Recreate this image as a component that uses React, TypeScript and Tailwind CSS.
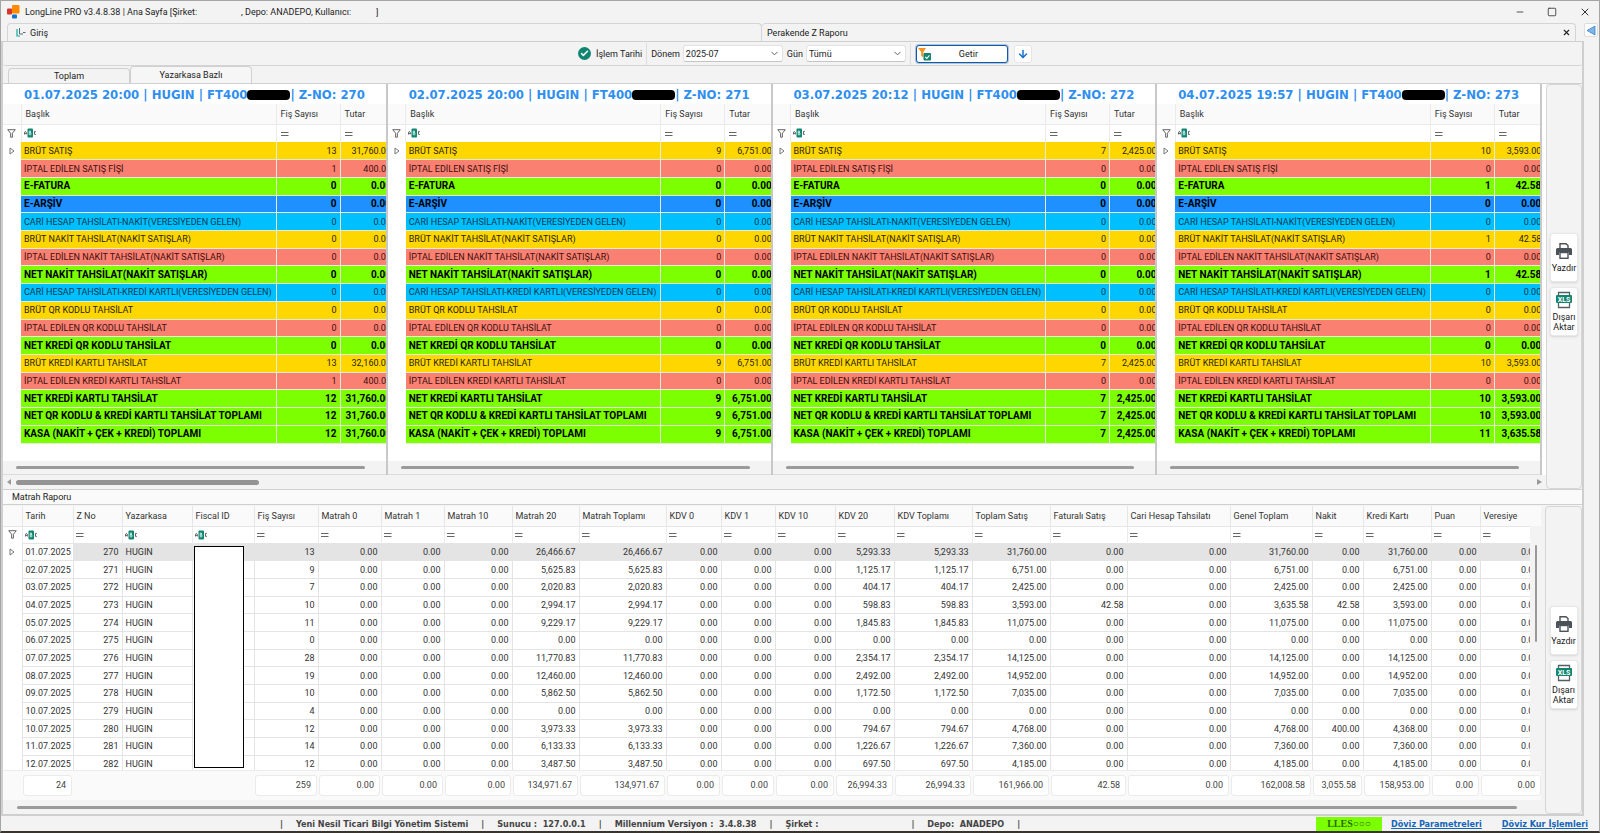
import React, { useState } from "react";
import { ChevronDown, ArrowDown, Check, Minus, Square, X } from "lucide-react";

type Tone = "gold" | "salmon" | "green" | "blue" | "sky";

const TONES: Record<Tone, string> = {
  gold: "bg-[#ffd700] text-[#2a2300]",
  salmon: "bg-[#fa8072] text-[#3a0f0c]",
  green: "bg-[#7cff00] text-black font-bold text-[10px]",
  blue: "bg-[#1e90ff] text-black font-bold text-[10px]",
  sky: "bg-[#00bfff] text-[#063a52]",
};

const Z_LINES: { label: string; tone: Tone }[] = [
  { label: "BRÜT SATIŞ", tone: "gold" },
  { label: "İPTAL EDİLEN SATIŞ FİŞİ", tone: "salmon" },
  { label: "E-FATURA", tone: "green" },
  { label: "E-ARŞİV", tone: "blue" },
  { label: "CARİ HESAP TAHSİLATI-NAKİT(VERESİYEDEN GELEN)", tone: "sky" },
  { label: "BRÜT NAKİT TAHSİLAT(NAKİT SATIŞLAR)", tone: "gold" },
  { label: "İPTAL EDİLEN NAKİT TAHSİLAT(NAKİT SATIŞLAR)", tone: "salmon" },
  { label: "NET NAKİT TAHSİLAT(NAKİT SATIŞLAR)", tone: "green" },
  { label: "CARİ HESAP TAHSİLATI-KREDİ KARTLI(VERESİYEDEN GELEN)", tone: "sky" },
  { label: "BRÜT QR KODLU TAHSİLAT", tone: "gold" },
  { label: "İPTAL EDİLEN QR KODLU TAHSİLAT", tone: "salmon" },
  { label: "NET KREDİ QR KODLU TAHSİLAT", tone: "green" },
  { label: "BRÜT KREDİ KARTLI TAHSİLAT", tone: "gold" },
  { label: "İPTAL EDİLEN KREDİ KARTLI TAHSİLAT", tone: "salmon" },
  { label: "NET KREDİ KARTLI TAHSİLAT", tone: "green" },
  { label: "NET QR KODLU & KREDİ KARTLI TAHSİLAT TOPLAMI", tone: "green" },
  { label: "KASA (NAKİT + ÇEK + KREDİ) TOPLAMI", tone: "green" },
];

interface ZPanel {
  date: string;
  zNo: number;
  amountWidth: number;
  // [fiş sayısı, tutar] by line index, every other line is 0 / 0.00
  values: Record<number, [number, string]>;
}

const Z_PANELS: ZPanel[] = [
  {
    date: "01.07.2025 20:00",
    zNo: 270,
    amountWidth: 54,
    values: {
      0: [13, "31,760.00"], 1: [1, "400.00"], 12: [13, "32,160.00"], 13: [1, "400.00"],
      14: [12, "31,760.00"], 15: [12, "31,760.00"], 16: [12, "31,760.00"],
    },
  },
  {
    date: "02.07.2025 20:00",
    zNo: 271,
    amountWidth: 50,
    values: {
      0: [9, "6,751.00"], 12: [9, "6,751.00"], 14: [9, "6,751.00"], 15: [9, "6,751.00"], 16: [9, "6,751.00"],
    },
  },
  {
    date: "03.07.2025 20:12",
    zNo: 272,
    amountWidth: 50,
    values: {
      0: [7, "2,425.00"], 12: [7, "2,425.00"], 14: [7, "2,425.00"], 15: [7, "2,425.00"], 16: [7, "2,425.00"],
    },
  },
  {
    date: "04.07.2025 19:57",
    zNo: 273,
    amountWidth: 50,
    values: {
      0: [10, "3,593.00"], 2: [1, "42.58"], 5: [1, "42.58"], 7: [1, "42.58"], 12: [10, "3,593.00"],
      14: [10, "3,593.00"], 15: [10, "3,593.00"], 16: [11, "3,635.58"],
    },
  },
];

const COLUMNS: { title: string; width: number; text?: boolean; total?: string }[] = [
  { title: "Tarih", width: 51, text: true, total: "24" },
  { title: "Z No", width: 49 },
  { title: "Yazarkasa", width: 70, text: true },
  { title: "Fiscal ID", width: 62, text: true },
  { title: "Fiş Sayısı", width: 64, total: "259" },
  { title: "Matrah 0", width: 63, total: "0.00" },
  { title: "Matrah 1", width: 63, total: "0.00" },
  { title: "Matrah 10", width: 68, total: "0.00" },
  { title: "Matrah 20", width: 67, total: "134,971.67" },
  { title: "Matrah Toplamı", width: 87, total: "134,971.67" },
  { title: "KDV 0", width: 55, total: "0.00" },
  { title: "KDV 1", width: 54, total: "0.00" },
  { title: "KDV 10", width: 60, total: "0.00" },
  { title: "KDV 20", width: 59, total: "26,994.33" },
  { title: "KDV Toplamı", width: 78, total: "26,994.33" },
  { title: "Toplam Satış", width: 78, total: "161,966.00" },
  { title: "Faturalı Satış", width: 77, total: "42.58" },
  { title: "Cari Hesap Tahsilatı", width: 103, total: "0.00" },
  { title: "Genel Toplam", width: 82, total: "162,008.58" },
  { title: "Nakit", width: 51, total: "3,055.58" },
  { title: "Kredi Kartı", width: 68, total: "158,953.00" },
  { title: "Puan", width: 49, total: "0.00" },
  { title: "Veresiye", width: 62, total: "0.00" },
];

// date, z no, receipts, matrah 20, kdv 20, toplam satış, faturalı, genel toplam, nakit, kredi
const DAYS: string[][] = [
  ["01.07.2025", "270", "13", "26,466.67", "5,293.33", "31,760.00", "0.00", "31,760.00", "0.00", "31,760.00"],
  ["02.07.2025", "271", "9", "5,625.83", "1,125.17", "6,751.00", "0.00", "6,751.00", "0.00", "6,751.00"],
  ["03.07.2025", "272", "7", "2,020.83", "404.17", "2,425.00", "0.00", "2,425.00", "0.00", "2,425.00"],
  ["04.07.2025", "273", "10", "2,994.17", "598.83", "3,593.00", "42.58", "3,635.58", "42.58", "3,593.00"],
  ["05.07.2025", "274", "11", "9,229.17", "1,845.83", "11,075.00", "0.00", "11,075.00", "0.00", "11,075.00"],
  ["06.07.2025", "275", "0", "0.00", "0.00", "0.00", "0.00", "0.00", "0.00", "0.00"],
  ["07.07.2025", "276", "28", "11,770.83", "2,354.17", "14,125.00", "0.00", "14,125.00", "0.00", "14,125.00"],
  ["08.07.2025", "277", "19", "12,460.00", "2,492.00", "14,952.00", "0.00", "14,952.00", "0.00", "14,952.00"],
  ["09.07.2025", "278", "10", "5,862.50", "1,172.50", "7,035.00", "0.00", "7,035.00", "0.00", "7,035.00"],
  ["10.07.2025", "279", "4", "0.00", "0.00", "0.00", "0.00", "0.00", "0.00", "0.00"],
  ["10.07.2025", "280", "12", "3,973.33", "794.67", "4,768.00", "0.00", "4,768.00", "400.00", "4,368.00"],
  ["11.07.2025", "281", "14", "6,133.33", "1,226.67", "7,360.00", "0.00", "7,360.00", "0.00", "7,360.00"],
  ["12.07.2025", "282", "12", "3,487.50", "697.50", "4,185.00", "0.00", "4,185.00", "0.00", "4,185.00"],
];

const toCells = ([date, z, count, base, vat, sales, invoiced, total, cash, credit]: string[]) => [
  date, z, "HUGIN", "", count, "0.00", "0.00", "0.00", base, base, "0.00", "0.00", "0.00",
  vat, vat, sales, invoiced, "0.00", total, cash, credit, "0.00", "0.00",
];

function FunnelIcon() {
  return (
    <svg className="mx-auto h-[9px] w-[9px]" viewBox="0 0 9 9" fill="none" stroke="#666" strokeWidth="1">
      <path d="M.7.7h7.6L5.4 4.2v4H3.6v-4z" />
    </svg>
  );
}

function RowArrow() {
  return (
    <svg className="mx-auto h-[8px] w-[6px]" viewBox="0 0 6 8" fill="none" stroke="#777" strokeWidth="1">
      <path d="M1 1l4 3-4 3z" />
    </svg>
  );
}

function AbcIcon() {
  return (
    <svg className="h-[10px] w-[13px]" viewBox="0 0 13 10">
      <path d="M.5 6.5V4.2L1.4 3.3 2.3 4.2v2.3M.5 5.4h1.8" stroke="#444" strokeWidth=".8" fill="none" />
      <rect x="3.5" y=".5" width="5.5" height="9" rx="1" fill="#128570" />
      <path d="M5.2 3h1.3v1.8H5.2zM5.2 4.8h1.7v2H5.2z" stroke="#d6f2ec" strokeWidth=".8" fill="none" />
      <path d="M11.9 3.4h-1.4v3h1.4" stroke="#444" strokeWidth=".8" fill="none" />
    </svg>
  );
}

function EqualsIcon() {
  return (
    <svg className="h-[5px] w-[8px]" viewBox="0 0 8 5">
      <path d="M0 1.5h7.5M0 4.5h7.5" stroke="#666" strokeWidth="1" />
    </svg>
  );
}

function PrinterIcon() {
  return (
    <svg className="h-[18px] w-[18px]" viewBox="0 0 18 18">
      <path d="M5 6V1.7h6l2 1.800V6" fill="#fff" stroke="#4b5358" strokeWidth="1.4" />
      <path d="M2.500 6h13A1.500 1.500 0 0 1 17 7.500v5.500h-3v-2.500H4V13H1V7.500A1.500 1.500 0 0 1 2.500 6z" fill="#4b5358" />
      <rect x="5" y="10.5" width="8" height="5.8" fill="#fff" stroke="#4b5358" strokeWidth="1.4" />
    </svg>
  );
}

function XlsIcon() {
  return (
    <svg className="h-[18px] w-[18px]" viewBox="0 0 18 18">
      <path d="M3.500 5V1.500h11V5M3.500 12v4.500h11V12" fill="none" stroke="#566066" strokeWidth="1.3" />
      <rect x="1" y="4" width="16" height="8" rx="1" fill="#128570" />
      <text x="9" y="10.6" textAnchor="middle" fontSize="7" fontWeight="700" fontFamily="Roboto, sans-serif" fill="#fff">
        XLS
      </text>
    </svg>
  );
}

function SideButtons({ className }: { className: string }) {
  const button =
    "flex h-[49px] w-[28px] flex-col items-center rounded-[3px] border border-[#e8e8e8] bg-white text-center leading-[10px] shadow-sm";
  return (
    <aside className={`flex shrink-0 flex-col items-center gap-[5px] rounded-[4px] border border-[#d6d6d6] bg-[#f3f3f3] ${className}`}>
      <button type="button" className={`${button} gap-[3px] pt-[8px]`}>
        <PrinterIcon />
        Yazdır
      </button>
      <button type="button" className={`${button} gap-[3px] pt-[3px]`}>
        <XlsIcon />
        <span>
          Dışarı
          <br />
          Aktar
        </span>
      </button>
    </aside>
  );
}

function ZReportPanel({ panel }: { panel: ZPanel }) {
  const widths = [18, 255, 64, panel.amountWidth];
  return (
    <section className="flex min-w-0 flex-1 flex-col overflow-hidden border-r-2 border-[#c8c8c8] bg-white">
      <h2 className="flex h-[20px] items-center justify-center pt-[2px] whitespace-pre font-['DejaVu_Sans_Condensed','DejaVu_Sans',sans-serif] text-[13px] font-bold text-[#2f8ff0]">
        {panel.date} | HUGIN | FT400
        <span className="h-[10px] w-[43px] rounded-[4px] bg-black" />
        {" "}| Z-NO: {panel.zNo}
      </h2>
      <table className="table-fixed border-collapse" style={{ width: widths.reduce((sum, width) => sum + width, 0) }}>
        <colgroup>
          {widths.map((width, index) => (
            <col key={index} style={{ width }} />
          ))}
        </colgroup>
        <thead>
          <tr className="h-[20px] bg-[#fafafa] text-left text-[#333]">
            <th className="border-r border-b border-[#ebebeb]" />
            <th className="border-r border-b border-[#ebebeb] px-1 font-normal">Başlık</th>
            <th className="border-r border-b border-[#ebebeb] px-1 font-normal">Fiş Sayısı</th>
            <th className="border-b border-[#ebebeb] px-1 font-normal">Tutar</th>
          </tr>
          <tr className="h-[18px]">
            <td className="border-r border-[#ebebeb]"><FunnelIcon /></td>
            <td className="border-r border-[#ebebeb] px-[2px]"><AbcIcon /></td>
            <td className="border-r border-[#ebebeb] px-1"><EqualsIcon /></td>
            <td className="px-1"><EqualsIcon /></td>
          </tr>
        </thead>
        <tbody className="h-[301px]">
          {Z_LINES.map((line, index) => {
            const [count, amount] = panel.values[index] ?? [0, "0.00"];
            return (
              <tr key={line.label} className="h-[17px] leading-[14px]">
                <td>{index === 0 && <RowArrow />}</td>
                <td className={`border-r border-b border-[#e6ecd8] pl-[3px] whitespace-nowrap ${TONES[line.tone]}`}>{line.label}</td>
                <td className={`border-r border-b border-[#e6ecd8] px-[3px] text-right ${TONES[line.tone]}`}>{count}</td>
                <td className={`border-b border-[#e6ecd8] px-[3px] text-right ${TONES[line.tone]}`}>{amount}</td>
              </tr>
            );
          })}
        </tbody>
      </table>
      <div className="mt-auto flex h-[14px] items-center border-b border-[#dcdcdc] bg-[#f3f3f3] pr-[21px] pl-[13px]">
        <div className="h-[3px] w-full rounded-full bg-[#9a9a9a]" />
      </div>
    </section>
  );
}

function ColumnWidths() {
  return (
    <colgroup>
      <col style={{ width: 19 }} />
      {COLUMNS.map((column) => (
        <col key={column.title} style={{ width: column.width }} />
      ))}
    </colgroup>
  );
}

function MatrahTable() {
  return (
    <div className="mr-[4px] flex min-w-0 flex-1 flex-col bg-[#fafafa]">
      <div className="relative h-[264px] overflow-hidden bg-white">
        <table className="w-full table-fixed border-collapse text-[#333]">
          <ColumnWidths />
          <thead>
            <tr className="h-[20px] bg-[#fafafa] text-left">
              <th className="border-r border-b border-[#e6e6e6]" />
              {COLUMNS.map((column) => (
                <th key={column.title} className="border-r border-b border-[#e6e6e6] px-[3px] font-normal whitespace-nowrap">
                  {column.title}
                </th>
              ))}
            </tr>
            <tr className="h-[17px]">
              <td className="border-r border-[#ebebeb]"><FunnelIcon /></td>
              {COLUMNS.map((column) => (
                <td key={column.title} className="border-r border-[#ebebeb] px-[2px]">
                  {column.text ? <AbcIcon /> : <EqualsIcon />}
                </td>
              ))}
            </tr>
          </thead>
          <tbody className="h-[230px]">
            {DAYS.map((day, rowIndex) => (
              <tr key={day[1]} className="h-[17px] leading-[14px]">
                <td>{rowIndex === 0 && <RowArrow />}</td>
                {toCells(day).map((value, index) => (
                  <td
                    key={COLUMNS[index].title}
                    className={`border border-[#e4e4e4] px-[3px] ${COLUMNS[index].text ? "text-left" : "text-right"} ${
                      rowIndex === 0 && index > 0 ? "bg-[#e4e4e4]" : ""
                    }`}
                  >
                    {value}
                  </td>
                ))}
              </tr>
            ))}
          </tbody>
        </table>
        {/* Fiscal ids are masked */}
        <div className="absolute top-[40px] left-[191px] h-[222px] w-[50px] border border-black bg-white" />
        <div className="absolute top-[20px] right-0 flex h-full w-[11px] justify-center bg-[#f3f3f3] pt-[19px]">
          <div className="h-[97px] w-[2px] rounded-full bg-[#999]" />
        </div>
      </div>
      <table className="h-[29px] w-full table-fixed border-collapse border-t border-[#ececec] text-[#444]">
        <ColumnWidths />
        <tbody>
          <tr>
            <td />
            {COLUMNS.map((column) => (
              <td key={column.title} className="px-px text-right">
                {column.total && (
                  <div className="h-[21px] rounded-[3px] border border-[#ebebeb] bg-white pr-[5px] leading-[19px]">{column.total}</div>
                )}
              </td>
            ))}
          </tr>
        </tbody>
      </table>
      <div className="mt-px flex h-[14px] items-center bg-[#f3f3f3] pr-[24px] pl-[14px]">
        <div className="h-[3px] w-full rounded-full bg-[#9a9a9a]" />
      </div>
    </div>
  );
}

function SelectBox({ id, label, value, options }: { id: string; label: string; value: string; options: string[] }) {
  const [selected, setSelected] = useState(value);
  return (
    <div className="flex items-center gap-[3px]">
      <label htmlFor={id}>{label}</label>
      <div className="relative">
        <select
          id={id}
          value={selected}
          onChange={(e) => setSelected(e.target.value)}
          className="h-[17px] w-[100px] appearance-none rounded-[3px] border border-[#e2e2e2] border-b-[#c4c4c4] bg-white px-[2px]"
        >
          {options.map((option) => (
            <option key={option}>{option}</option>
          ))}
        </select>
        <ChevronDown className="pointer-events-none absolute top-[3px] right-[3px] h-[11px] w-[11px] text-[#555]" />
      </div>
    </div>
  );
}

export default function App() {
  const [view, setView] = useState("Yazarkasa Bazlı");

  return (
    <div className="flex w-full flex-col overflow-hidden border border-b-2 border-[#a5a5a5] border-b-[#3a352c] bg-[#f3f3f3] font-['Roboto',sans-serif] text-[9px] leading-[14px] text-[#222]">
      {/* Title bar */}
      <header className="flex h-[22px] items-center pr-[8px] pl-[6px]">
        <svg className="h-[14px] w-[13px]" viewBox="0 0 13 14">
          <rect x="5" y="0" width="7.5" height="8.5" rx="1" fill="#ff8a00" />
          <rect x="0" y="3.5" width="5" height="6" rx="1" fill="#d8352a" />
          <rect x="5" y="9.5" width="5" height="4" rx="1" fill="#1673d1" />
        </svg>
        <h1 className="ml-[5px] flex">
          <span className="w-[216px]">LongLine PRO v3.4.8.38 | Ana Sayfa [Şirket:</span>
          <span className="w-[135px]">, Depo: ANADEPO, Kullanıcı:</span>
          <span>]</span>
        </h1>
        <div className="ml-auto flex items-center gap-[22px] text-[#333]">
          <button type="button" aria-label="Simge durumuna küçült"><Minus className="h-[10px] w-[10px]" /></button>
          <button type="button" aria-label="Ekranı kapla"><Square className="h-[10px] w-[10px]" /></button>
          <button type="button" aria-label="Kapat"><X className="h-[12px] w-[12px]" /></button>
        </div>
      </header>

      <div className="flex">
        <div className="flex min-w-0 flex-1 flex-col">
          {/* Document tabs */}
          <nav className="flex h-[18px] pr-[8px] pl-[6px]">
            <button type="button" className="flex flex-1 items-center gap-[4px] rounded-t-[4px] border border-b-0 border-[#d4d4d4] pl-[8px]">
              <svg className="h-[9px] w-[10px]" viewBox="0 0 10 9" fill="none">
                <path d="M1 1v7h3" stroke="#1aa8a0" strokeWidth="1.2" />
                <path d="M3.5 0v6h3.5M7 4.500h2.5" stroke="#4f6f78" strokeWidth="1" />
              </svg>
              Giriş
            </button>
            <div className="flex w-[814px] items-center justify-between rounded-t-[4px] border-t border-r border-[#d4d4d4] pr-[4px] pl-[5px]">
              <button type="button">Perakende Z Raporu</button>
              <button type="button" aria-label="Sekmeyi kapat"><X className="h-[9px] w-[9px]" strokeWidth={3} /></button>
            </div>
          </nav>

          <div className="border-t border-r-2 border-b-2 border-l-2 border-[#cfcfcf]">
            {/* Filter bar */}
            <div className="flex h-[24px] items-center rounded-[3px] border-b border-[#d4d4d4] pl-[575px]">
              <div className="flex h-[22px] items-center gap-[5px] border-r border-[#dcdcdc] pr-[4px]">
                <span className="flex h-[13px] w-[13px] items-center justify-center rounded-full bg-[#128570]">
                  <Check className="h-[9px] w-[9px] text-white" strokeWidth={4} />
                </span>
                İşlem Tarihi
              </div>
              <div className="flex h-[22px] items-center gap-[4px] border-r border-[#dcdcdc] px-[4px]">
                <SelectBox id="donem" label="Dönem" value="2025-07" options={["2025-07", "2025-06"]} />
                <SelectBox id="gun" label="Gün" value="Tümü" options={["Tümü", "1", "2"]} />
              </div>
              <button type="button" className="ml-[5px] flex h-[18px] w-[92px] items-center rounded-[3px] border border-[#0f5ba8] bg-white px-px ring-1 ring-[#0f5ba8]/30">
                <svg className="h-[14px] w-[13px]" viewBox="0 0 13 14">
                  <path d="M0 1h8L5.300 5v5.500L3.200 9V5z" fill="#f7921e" />
                  <rect x="5.5" y="6" width="7.5" height="7.5" rx="1" fill="#128570" />
                  <path d="M7.200 9.800l1.600 1.600 2.700-3" stroke="#fff" strokeWidth="1.1" fill="none" />
                </svg>
                <span className="flex-1 text-center">Getir</span>
              </button>
              <button type="button" aria-label="Aşağı" className="ml-[6px] flex h-[18px] w-[18px] items-center justify-center rounded-[3px] border border-[#e6e6e6] bg-white text-[#1673c8]">
                <ArrowDown className="h-[12px] w-[12px]" strokeWidth={3} />
              </button>
            </div>

            {/* View tabs */}
            <div className="flex h-[18px] items-stretch border-b border-[#d0d0d0] pl-[5px]">
              {["Toplam", "Yazarkasa Bazlı"].map((name) => (
                <button
                  key={name}
                  type="button"
                  onClick={() => setView(name)}
                  className={`w-[122px] rounded-t-[4px] border border-b-0 border-[#d0d0d0] ${view === name ? "bg-[#f6f6f6]" : "mt-[2px]"}`}
                >
                  {name}
                </button>
              ))}
            </div>

            {/* Z report panels */}
            <div className="flex h-[405px]">
              <div className="flex min-w-0 flex-1 flex-col">
                <div className="flex flex-1 bg-white pr-[4px]">
                  {Z_PANELS.map((panel) => (
                    <ZReportPanel key={panel.zNo} panel={panel} />
                  ))}
                </div>
                <div className="flex h-[14px] items-center justify-between px-[4px]">
                  <div className="flex items-center gap-[5px]">
                    <svg className="h-[6px] w-[4px]" viewBox="0 0 4 6"><path d="M4 0v6L0 3z" fill="#999" /></svg>
                    <div className="h-[5px] w-[243px] rounded-full bg-[#949494]" />
                  </div>
                  <svg className="h-[6px] w-[5px]" viewBox="0 0 5 6"><path d="M0 0v6l5-3z" fill="#999" /></svg>
                </div>
              </div>
              <SideButtons className="w-[36px] pt-[148px]" />
            </div>

            <h3 className="h-[16px] border-t border-b border-[#d0d0d0] bg-[#fafafa] pl-[9px] leading-[14px]">Matrah Raporu</h3>
            <div className="flex pt-px">
              <MatrahTable />
              <SideButtons className="w-[37px] pt-[99px]" />
            </div>
          </div>
        </div>

        <div className="w-[15px] shrink-0">
          <button type="button" aria-label="Paneli aç" className="flex h-[14px] w-[14px] items-center justify-center rounded-[2px] border border-[#ddd] bg-white">
            <svg className="h-[11px] w-[10px]" viewBox="0 0 10 11">
              <path d="M9 1v9L1 5.5z" fill="#7db7e8" stroke="#3a7fc4" strokeWidth=".8" />
            </svg>
          </button>
        </div>
      </div>

      {/* Status bar */}
      <footer className="flex h-[15px] items-center pr-[11px] pl-[279px] font-['DejaVu_Sans_Condensed','DejaVu_Sans',sans-serif] font-bold whitespace-pre text-[#444]">
        <div className="flex flex-1 items-center gap-[13px]">
          <span>|</span>
          <span>Yeni Nesil Ticari Bilgi Yönetim Sistemi</span>
          <span>|</span>
          <span>{"Sunucu :  127.0.0.1"}</span>
          <span>|</span>
          <span>{"Millennium Versiyon :  3.4.8.38"}</span>
          <span>|</span>
          <span className="w-[113px]">Şirket :</span>
          <span>|</span>
          <span>{"Depo:  ANADEPO"}</span>
          <span>|</span>
        </div>
        <span className="mr-[9px] w-[66px] bg-[#7cff00] text-center font-['Liberation_Serif',serif] text-[10px] text-[#2b6b00]">LLES○○○</span>
        <a href="#parametre" className="mr-[20px] text-[#1565b8] underline">Döviz Parametreleri</a>
        <a href="#kur" className="text-[#1565b8] underline">Döviz Kur İşlemleri</a>
      </footer>
    </div>
  );
}
